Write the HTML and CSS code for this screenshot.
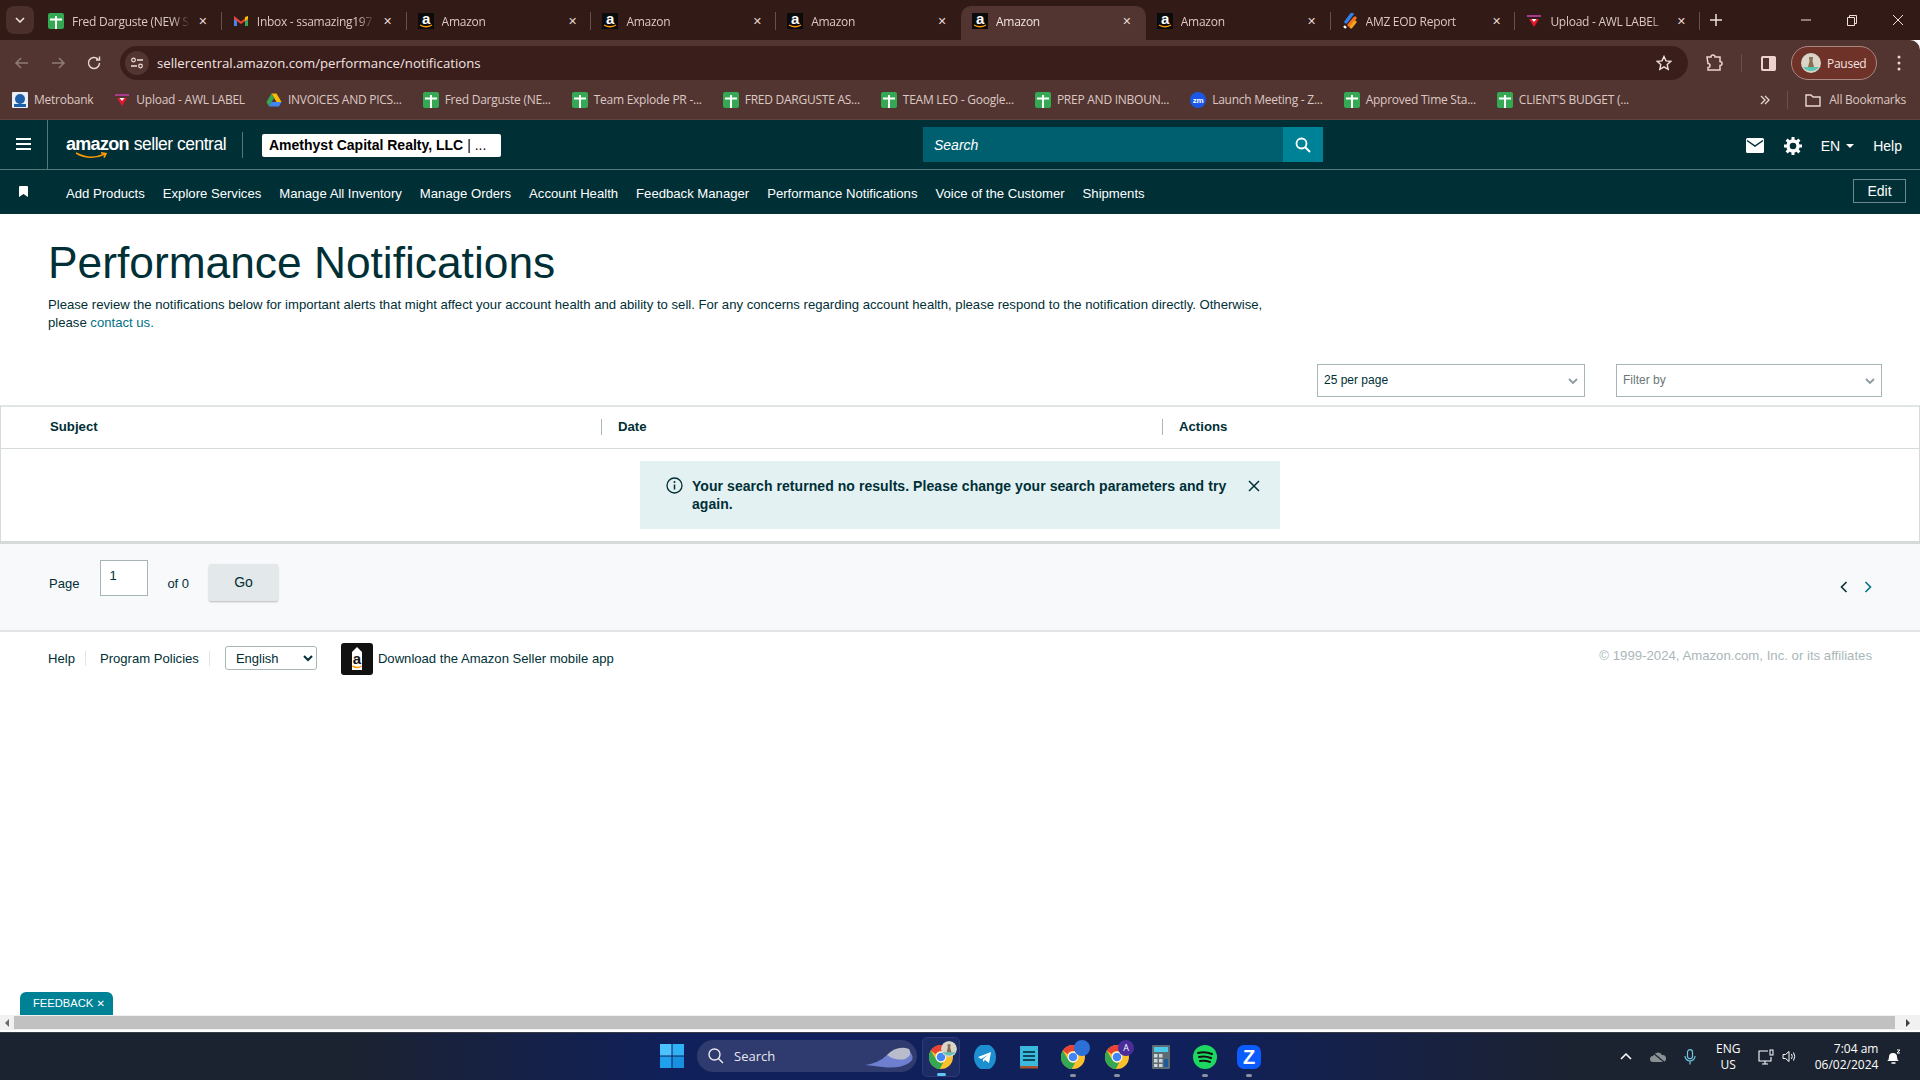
FILE: index.html
```html
<!DOCTYPE html>
<html lang="en">
<head>
    <meta charset="UTF-8">
    <meta name="viewport" content="width=device-width, initial-scale=1.0">
    <title>Performance Notifications</title>
    <link rel="stylesheet" href="styles.css">
</head>
<body>
    <!-- shared favicons -->
    <svg class="defs" width="0" height="0">
        <symbol id="fav-sheet" viewBox="0 0 16 16">
            <rect width="16" height="16" rx="2" fill="#34a853"/>
            <path d="M7 3h2v2.500h5v2H9V16H7V7.500H2v-2h5z" fill="#fff"/>
        </symbol>
        <symbol id="fav-amazon" viewBox="0 0 16 16">
            <rect width="16" height="16" fill="#0b0b0b"/>
            <text x="8" y="10.500" text-anchor="middle" font-family="Liberation Sans" font-weight="700" font-size="15" fill="#fff">a</text>
            <path d="M2 12q6 3.500 12 0" fill="none" stroke="#f90" stroke-width="1.400"/>
        </symbol>
        <symbol id="fav-upload" viewBox="0 0 16 16">
            <path d="M1 2h14v2H1z" fill="#a83a8c"/>
            <path d="M3 6h10l-5 8z" fill="#e0182d"/>
            <path d="M5.500 6h5L8 9z" fill="#fff"/>
        </symbol>
        <symbol id="chrome" viewBox="0 0 24 24">
            <circle cx="12" cy="12" r="12" fill="#fbc02d"/>
            <path d="M12 0a12 12 0 0 1 10.400 6H12a6 6 0 0 0-5.300 3.200L1.800 5.600A12 12 0 0 1 12 0z" fill="#ea4335"/>
            <path d="M1.800 5.600l5 8.400 4 10A12 12 0 0 1 1.800 5.600z" fill="#34a853"/>
            <path d="M6.800 14a6 6 0 0 0 7.400 3.600L10.800 24a12 12 0 0 1-9-6.500z" fill="#34a853"/>
            <circle cx="12" cy="12" r="5.400" fill="#fff"/>
            <circle cx="12" cy="12" r="4.300" fill="#4285f4"/>
        </symbol>
        <symbol id="avatar" viewBox="0 0 20 20">
            <circle cx="10" cy="10" r="10" fill="#d9d5c8"/>
            <path d="M2 14h16a10 10 0 0 1-16 0z" fill="#58c4b4"/>
            <path d="M8 4h4l-.500 4 1.500 6H7l1.500-6z" fill="#8a6d4f"/>
        </symbol>
    </svg>

    <div class="tabstrip">
        <button class="tab-search"><svg width="10" height="6" viewBox="0 0 10 6"><path d="M1 1l4 4 4-4" fill="none" stroke="#f0e0dc" stroke-width="1.600"/></svg></button>
        <div class="tab sep"><svg class="fav"><use href="#fav-sheet"/></svg><span class="tab-title">Fred Darguste (NEW S</span><span class="tab-x">✕</span></div>
        <div class="tab sep">
            <svg class="fav" viewBox="0 0 16 16"><path d="M1 3v10h3V7z" fill="#4285f4"/><path d="M15 3v10h-3V7z" fill="#34a853"/><path d="M1 3l7 5.500L15 3v3L8 11 1 6z" fill="#ea4335"/><path d="M12 4l3-1v3l-3 2z" fill="#fbbc04"/></svg>
            <span class="tab-title">Inbox - ssamazing197</span><span class="tab-x">✕</span>
        </div>
        <div class="tab sep"><svg class="fav"><use href="#fav-amazon"/></svg><span class="tab-title">Amazon</span><span class="tab-x">✕</span></div>
        <div class="tab sep"><svg class="fav"><use href="#fav-amazon"/></svg><span class="tab-title">Amazon</span><span class="tab-x">✕</span></div>
        <div class="tab"><svg class="fav"><use href="#fav-amazon"/></svg><span class="tab-title">Amazon</span><span class="tab-x">✕</span></div>
        <div class="tab active"><svg class="fav"><use href="#fav-amazon"/></svg><span class="tab-title">Amazon</span><span class="tab-x">✕</span></div>
        <div class="tab sep"><svg class="fav"><use href="#fav-amazon"/></svg><span class="tab-title">Amazon</span><span class="tab-x">✕</span></div>
        <div class="tab sep">
            <svg class="fav" viewBox="0 0 16 16"><path d="M4 9l6-8" stroke="#2f80ed" stroke-width="3.400" stroke-linecap="round"/><path d="M7 12l6-7" stroke="#f2711c" stroke-width="3.400" stroke-linecap="round"/><path d="M9 14l4-5" stroke="#f2a51c" stroke-width="3" stroke-linecap="round"/><path d="M2 13l2 2" stroke="#fff" stroke-width="2.400"/></svg>
            <span class="tab-title">AMZ EOD Report</span><span class="tab-x">✕</span>
        </div>
        <div class="tab sep"><svg class="fav"><use href="#fav-upload"/></svg><span class="tab-title">Upload - AWL LABEL</span><span class="tab-x">✕</span></div>
        <svg class="new-tab" width="12" height="12" viewBox="0 0 12 12"><path d="M6 0v12M0 6h12" stroke="#f0e0dc" stroke-width="1.500"/></svg>
        <div class="win-controls">
            <svg width="12" height="12" viewBox="0 0 12 12"><path d="M1 6h10" stroke="#f0e0dc"/></svg>
            <svg width="12" height="12" viewBox="0 0 12 12"><path d="M1.500 3.500h7v8h-7zM3.500 3.500v-2h7v8h-2" fill="none" stroke="#f0e0dc"/></svg>
            <svg width="12" height="12" viewBox="0 0 12 12"><path d="M1 1l10 10M11 1L1 11" stroke="#f0e0dc"/></svg>
        </div>
    </div>

    <div class="toolbar">
        <svg class="nav-arrow" width="16" height="16" viewBox="0 0 16 16"><path d="M14 8H2M7 3L2 8l5 5" fill="none" stroke="#907a76" stroke-width="1.500"/></svg>
        <svg class="nav-arrow" width="16" height="16" viewBox="0 0 16 16"><path d="M2 8h12M9 3l5 5-5 5" fill="none" stroke="#907a76" stroke-width="1.500"/></svg>
        <svg class="nav-arrow" width="16" height="16" viewBox="0 0 16 16"><path d="M13.500 8a5.500 5.500 0 1 1-1.600-3.900M13.500 1.500v3.500H10" fill="none" stroke="#e6d6d2" stroke-width="1.500"/></svg>
        <div class="omnibox">
            <span class="site-info"><svg width="14" height="12" viewBox="0 0 14 12"><circle cx="3.500" cy="3" r="1.800" fill="none" stroke="#f0e0dc" stroke-width="1.200"/><path d="M7 3h6M1 9h6" stroke="#f0e0dc" stroke-width="1.400"/><circle cx="10.500" cy="9" r="1.800" fill="none" stroke="#f0e0dc" stroke-width="1.200"/></svg></span>
            <span class="url">sellercentral.amazon.com/performance/notifications</span>
            <svg class="star" width="16" height="16" viewBox="0 0 16 16"><path d="M8 1.500l2 4.400 4.700.500-3.500 3.200 1 4.700L8 11.900l-4.200 2.400 1-4.700L1.300 6.400 6 5.900z" fill="none" stroke="#f0e0dc" stroke-width="1.400"/></svg>
        </div>
        <svg class="ext" width="18" height="18" viewBox="0 0 18 18"><path d="M2 3h4a2 2 0 0 1 4 0h5v4.500a2 2 0 0 1 0 4V16H3v-2.500a2 2 0 0 0 0-4z" fill="none" stroke="#ecd3ce" stroke-width="1.500"/></svg>
        <span class="tool-sep"></span>
        <svg class="panel" width="15" height="15" viewBox="0 0 15 15"><rect x=".75" y=".75" width="13.500" height="13.500" rx="1" fill="#ecd3ce" stroke="#ecd3ce" stroke-width="1.500"/><rect x="2" y="2" width="6" height="11" fill="#523531"/></svg>
        <div class="paused"><svg class="pic"><use href="#avatar"/></svg>Paused</div>
        <svg class="dots" width="4" height="16" viewBox="0 0 4 16"><circle cx="2" cy="2" r="1.500" fill="#ecd3ce"/><circle cx="2" cy="8" r="1.500" fill="#ecd3ce"/><circle cx="2" cy="14" r="1.500" fill="#ecd3ce"/></svg>
    </div>

    <div class="bookmarks">
        <span class="bm"><svg class="fav" viewBox="0 0 16 16"><rect width="16" height="16" rx="1" fill="#e8eef6"/><circle cx="8" cy="7" r="5" fill="#1d5fa8"/><path d="M2 12h12v3H2z" fill="#1d5fa8"/></svg>Metrobank</span>
        <span class="bm"><svg class="fav"><use href="#fav-upload"/></svg>Upload - AWL LABEL</span>
        <span class="bm"><svg class="fav" viewBox="0 0 16 16"><path d="M5.500 1.500h5l5 8.500h-5z" fill="#fbbc04"/><path d="M5.500 1.500L.500 10 3 14.500 8 6z" fill="#34a853"/><path d="M3 14.500h10l2.500-4.500h-10z" fill="#4285f4"/></svg>INVOICES AND PICS...</span>
        <span class="bm"><svg class="fav"><use href="#fav-sheet"/></svg>Fred Darguste (NE...</span>
        <span class="bm"><svg class="fav"><use href="#fav-sheet"/></svg>Team Explode PR -...</span>
        <span class="bm"><svg class="fav"><use href="#fav-sheet"/></svg>FRED DARGUSTE AS...</span>
        <span class="bm"><svg class="fav"><use href="#fav-sheet"/></svg>TEAM LEO - Google...</span>
        <span class="bm"><svg class="fav"><use href="#fav-sheet"/></svg>PREP AND INBOUN...</span>
        <span class="bm"><svg class="fav" viewBox="0 0 16 16"><circle cx="8" cy="8" r="8" fill="#1a56e8"/><text x="8" y="10.500" text-anchor="middle" font-family="Liberation Sans" font-size="8" font-weight="700" fill="#fff">zm</text></svg>Launch Meeting - Z...</span>
        <span class="bm"><svg class="fav"><use href="#fav-sheet"/></svg>Approved Time Sta...</span>
        <span class="bm"><svg class="fav"><use href="#fav-sheet"/></svg>CLIENT'S BUDGET (...</span>
        <span class="bm-more">
            <svg width="10" height="10" viewBox="0 0 10 10"><path d="M1 1l4 4-4 4M5 1l4 4-4 4" fill="none" stroke="#e6d6d2" stroke-width="1.300"/></svg>
            <span class="tool-sep"></span>
            <span class="bm all-bookmarks"><svg class="fav" viewBox="0 0 16 16"><path d="M1 3h5l2 2h7v9H1z" fill="none" stroke="#e6d6d2" stroke-width="1.400"/></svg>All Bookmarks</span>
        </span>
    </div>

    <header class="sc-header">
        <button class="burger"><svg width="15" height="12" viewBox="0 0 15 12"><path d="M0 1h15M0 6h15M0 11h15" stroke="#fff" stroke-width="1.800"/></svg></button>
        <div class="logo">
            <span class="logo-amazon">amazon</span><span class="logo-rest">seller central</span>
            <svg class="smile" width="33" height="8" viewBox="0 0 33 8"><path d="M1 1q14 8 29 1M26 .8l5 .800-2 4" fill="none" stroke="#f90" stroke-width="1.600"/></svg>
        </div>
        <div class="account">Amethyst Capital Realty, LLC <span class="account-rest">| ...</span></div>
        <div class="search">
            <span class="search-input">Search</span>
            <span class="search-btn"><svg width="16" height="16" viewBox="0 0 16 16"><circle cx="6.500" cy="6.500" r="5" fill="none" stroke="#fff" stroke-width="1.800"/><path d="M10 10l5 5" stroke="#fff" stroke-width="2"/></svg></span>
        </div>
        <div class="head-right">
            <svg width="18" height="15" viewBox="0 0 18 15"><rect width="18" height="15" rx="1.500" fill="#fff"/><path d="M1 2.500l8 5.500 8-5.500" fill="none" stroke="#002f36" stroke-width="1.500"/></svg>
            <svg class="gear" width="18" height="18" viewBox="0 0 18 18"><circle cx="9" cy="9" r="5" fill="none" stroke="#fff" stroke-width="3.400"/><path d="M9 0v4M9 14v4M0 9h4M14 9h4M2.600 2.600l2.800 2.800M12.600 12.600l2.800 2.800M15.400 2.600l-2.800 2.800M5.400 12.600l-2.800 2.800" stroke="#fff" stroke-width="3"/></svg>
            <span class="lang">EN<i class="caret"></i></span>
            <span>Help</span>
        </div>
    </header>

    <nav class="sc-nav">
        <svg class="nav-mark" width="9" height="11" viewBox="0 0 9 11"><path d="M0 1a1 1 0 0 1 1-1h7a1 1 0 0 1 1 1v10L4.500 8 0 11z" fill="#fff"/></svg>
        <a>Add Products</a>
        <a>Explore Services</a>
        <a>Manage All Inventory</a>
        <a>Manage Orders</a>
        <a>Account Health</a>
        <a>Feedback Manager</a>
        <a>Performance Notifications</a>
        <a>Voice of the Customer</a>
        <a>Shipments</a>
        <button class="edit">Edit</button>
    </nav>

    <main class="page">
        <h1>Performance Notifications</h1>
        <p class="intro">Please review the notifications below for important alerts that might affect your account health and ability to sell. For any concerns regarding account health, please respond to the notification directly. Otherwise, please <a href="#">contact us.</a></p>

        <div class="table-controls">
            <div class="fake-select">25 per page<svg width="10" height="7" viewBox="0 0 10 7"><path d="M1 1l4 4 4-4" fill="none" stroke="#8c9c9e" stroke-width="1.800"/></svg></div>
            <div class="fake-select placeholder">Filter by<svg width="10" height="7" viewBox="0 0 10 7"><path d="M1 1l4 4 4-4" fill="none" stroke="#8c9c9e" stroke-width="1.800"/></svg></div>
        </div>

        <div class="results">
            <div class="results-head">
                <span class="th first">Subject</span>
                <span class="th">Date</span>
                <span class="th">Actions</span>
            </div>
            <div class="results-body">
                <div class="notice">
                    <svg class="notice-icon" width="17" height="17" viewBox="0 0 17 17"><circle cx="8.500" cy="8.500" r="7.500" fill="none" stroke="#002f36" stroke-width="1.300"/><path d="M8.500 7.500v5" stroke="#002f36" stroke-width="1.500"/><circle cx="8.500" cy="5" r="1" fill="#002f36"/></svg>
                    <p>Your search returned no results. Please change your search parameters and try again.</p>
                    <svg class="notice-x" width="12" height="12" viewBox="0 0 12 12"><path d="M1 1l10 10M11 1L1 11" stroke="#002f36" stroke-width="1.500"/></svg>
                </div>
            </div>
        </div>

        <div class="pager">
            <span class="pager-text">Page</span>
            <input class="page-input" type="text" value="1">
            <span class="pager-text of">of 0</span>
            <button class="go">Go</button>
            <span class="pager-arrows">
                <svg width="8" height="12" viewBox="0 0 8 12"><path d="M6.500 1L1.500 6l5 5" fill="none" stroke="#002f36" stroke-width="1.600"/></svg>
                <svg width="8" height="12" viewBox="0 0 8 12"><path d="M1.500 1l5 5-5 5" fill="none" stroke="#007185" stroke-width="1.600"/></svg>
            </span>
        </div>

        <footer class="foot">
            <a class="foot-help">Help</a>
            <a class="foot-policies">Program Policies</a>
            <select class="foot-lang"><option>English</option></select>
            <svg class="app-icon" width="32" height="32" viewBox="0 0 32 32"><rect width="32" height="32" rx="3" fill="#111"/><path d="M11 9l5-5 5 5v18H11z" fill="#fff"/><text x="16" y="21" text-anchor="middle" font-family="Liberation Sans" font-weight="700" font-size="15" fill="#111">a</text><path d="M11.500 23q5 3 9 0" fill="none" stroke="#f90" stroke-width="1.500"/></svg>
            <a class="foot-app">Download the Amazon Seller mobile app</a>
            <span class="copyright">© 1999-2024, Amazon.com, Inc. or its affiliates</span>
        </footer>

        <div class="feedback">FEEDBACK <span class="feedback-x">✕</span></div>
    </main>

    <div class="hscroll">
        <i class="arrow-left"></i>
        <span class="thumb"></span>
        <i class="arrow-right"></i>
    </div>

    <div class="taskbar">
        <div class="task-center">
            <svg class="start" width="24" height="24" viewBox="0 0 24 24"><path d="M0 0h11.500v11.500H0z" fill="#4cc2ff"/><path d="M12.500 0H24v11.500H12.500z" fill="#30b0f5"/><path d="M0 12.500h11.500V24H0z" fill="#1f9fec"/><path d="M12.500 12.500H24V24H12.500z" fill="#1790e0"/></svg>
            <div class="task-search">
                <svg width="16" height="16" viewBox="0 0 16 16"><circle cx="6.500" cy="6.500" r="5.500" fill="none" stroke="#e8e8ee" stroke-width="1.400"/><path d="M10.500 10.500l4.500 4.500" stroke="#e8e8ee" stroke-width="1.500"/></svg>
                <span>Search</span>
                <svg class="search-art" width="52" height="26" viewBox="0 0 52 26"><path d="M2 22q14-2 22-10 12-8 24-2 4 6-2 10-10 6-26 4z" fill="#6f7fd0"/><path d="M24 12q10-10 22-6 4 6-4 10-10 2-18-4z" fill="#b9bccb"/></svg>
            </div>
            <div class="task-icons">
                <span class="task-icon current"><svg class="app"><use href="#chrome"/></svg><svg class="badge"><use href="#avatar"/></svg><i class="dot on"></i></span>
                <span class="task-icon"><svg class="app" viewBox="0 0 24 24"><ellipse cx="12" cy="12" rx="11" ry="13" fill="#1b8fd0"/><path d="M5 12l13-5-2 11-4-3-2 2v-3l5-4-7 4z" fill="#fff"/></svg></span>
                <span class="task-icon"><svg class="app" viewBox="0 0 24 24"><path d="M3 1h18v22H3z" fill="#3bb9dc"/><path d="M3 21h18v2.500H3z" fill="#a5562a"/><path d="M6 7h12M6 11h12M6 15h12" stroke="#10465c" stroke-width="1.800"/></svg></span>
                <span class="task-icon"><svg class="app"><use href="#chrome"/></svg><span class="badge badge-blue"></span><i class="dot"></i></span>
                <span class="task-icon"><svg class="app"><use href="#chrome"/></svg><span class="badge badge-purple">A</span><i class="dot"></i></span>
                <span class="task-icon"><svg class="app" viewBox="0 0 24 24"><rect x="3" width="18" height="24" rx="1" fill="#5f6b73"/><rect x="5" y="2" width="14" height="5" fill="#4cc8e8"/><path d="M5 9h3.500v3.500H5zM10 9h3.500v3.500H10zM5 14h3.500v3.500H5zM10 14h3.500v3.500H10zM5 19h3.500v3H5zM10 19h3.500v3H10z" fill="#cfd6da"/><rect x="15" y="14" width="4" height="8" fill="#1c5aa0"/></svg></span>
                <span class="task-icon"><svg class="app" viewBox="0 0 24 24"><circle cx="12" cy="12" r="12" fill="#1ed760"/><path d="M5 8q7-2 14 1M6 12q6-1.500 12 1M7 16q5-1 10 1" fill="none" stroke="#111" stroke-width="2" stroke-linecap="round"/></svg><i class="dot"></i></span>
                <span class="task-icon"><svg class="app" viewBox="0 0 24 24"><rect width="24" height="24" rx="7" fill="#0b5cff"/><text x="12" y="19" text-anchor="middle" font-family="Liberation Sans" font-weight="700" font-size="20" fill="#fff">Z</text></svg><i class="dot"></i></span>
            </div>
        </div>
        <div class="tray">
            <svg class="tray-up" width="12" height="7" viewBox="0 0 12 7"><path d="M1 6l5-5 5 5" fill="none" stroke="#fff" stroke-width="1.500"/></svg>
            <svg class="tray-cloud" width="16" height="12" viewBox="0 0 16 12"><path d="M3 11a3 3 0 0 1 0-6 5 5 0 0 1 9-1 3.500 3.500 0 0 1 1 7z" fill="#8b9095"/><path d="M2 1l12 10" stroke="#1c2330" stroke-width="1.200"/></svg>
            <svg class="tray-mic" width="12" height="16" viewBox="0 0 12 16"><rect x="3.500" y=".700" width="5" height="9" rx="2.500" fill="none" stroke="#6fc6e0" stroke-width="1.200"/><path d="M1 7a5 5 0 0 0 10 0M6 12v3.500" fill="none" stroke="#6fc6e0" stroke-width="1.200"/></svg>
            <div class="tray-lang"><span>ENG</span><span>US</span></div>
            <svg class="tray-net" width="16" height="16" viewBox="0 0 16 16"><path d="M10 2H1v10h12V8M4 15h6M7 12v3" fill="none" stroke="#fff" stroke-width="1.100"/><rect x="12" y="1" width="3" height="5" fill="none" stroke="#fff"/></svg>
            <svg class="tray-vol" width="16" height="13" viewBox="0 0 16 13"><path d="M1 4.500h2.500L7 1.500v10L3.500 8.500H1z" fill="none" stroke="#fff"/><path d="M9.500 4q1.500 2.500 0 5M11.500 2.500q2.500 4 0 8" fill="none" stroke="#fff"/></svg>
            <div class="tray-clock"><span>7:04 am</span><span>06/02/2024</span></div>
            <svg class="tray-bell" width="15" height="16" viewBox="0 0 15 16"><path d="M1 12q2-1 2-4 0-4 4-4t4 4q0 3 2 4z" fill="#fff"/><path d="M5.500 14h4" stroke="#fff" stroke-width="1.500"/><path d="M11 1h3l-3 3h3" fill="none" stroke="#fff"/></svg>
        </div>
    </div>
</body>
</html>
```

FILE: styles.css
```css
* {
    box-sizing: border-box;
}
html, body {
    margin: 0;
    height: 100%;
    overflow: hidden;
}
body {
    display: flex;
    flex-direction: column;
    width: 1920px;
    height: 1080px;
    font-family: "Liberation Sans", Arial, sans-serif;
    color: #002f36;
    background-color: #fff;
}
button {
    font-family: inherit;
}
.defs {
    position: absolute;
}
.fav {
    width: 16px;
    height: 16px;
    flex: none;
}

/* browser chrome */
.tabstrip {
    display: flex;
    align-items: flex-end;
    height: 40px;
    padding-left: 37px;
    background-color: #321a17;
    font-family: "Open Sans", sans-serif;
    font-size: 12px;
    letter-spacing: -.27px;
    color: #dcc8c4;
    position: relative;
}
.tab-search {
    position: absolute;
    left: 6px;
    top: 6px;
    width: 28px;
    height: 28px;
    border: 0;
    border-radius: 8px;
    background-color: #4a2f2b;
    display: flex;
    align-items: center;
    justify-content: center;
}
.tab {
    display: flex;
    align-items: center;
    width: 184.8px;
    height: 34px;
    padding: 0 12px 4px 11px;
    position: relative;
}
.tab.sep::after {
    content: "";
    position: absolute;
    right: 0;
    top: 6px;
    height: 18px;
    width: 1px;
    background-color: #6a514d;
}
.tab.active {
    background-color: #523531;
    border-radius: 10px 10px 0 0;
    color: #f2e4e1;
}
.tab-title {
    flex: 1;
    min-width: 0;
    margin-left: 8px;
    margin-right: 6px;
    white-space: nowrap;
    overflow: hidden;
    -webkit-mask-image: linear-gradient(to right, #000 85%, transparent);
    mask-image: linear-gradient(to right, #000 85%, transparent);
}
.tab-x {
    font-size: 11px;
    width: 14px;
    text-align: center;
    font-family: "DejaVu Sans", sans-serif;
    color: #e6d6d2;
}
.new-tab {
    margin: 0 0 14px 10px;
}
.win-controls {
    display: flex;
    gap: 34px;
    margin-left: 78px;
    margin-bottom: 14px;
}
.toolbar {
    display: flex;
    align-items: flex-end;
    height: 40px;
    background-color: #523531;
    border-radius: 0 10px 0 0;
    padding-left: 14px;
}
.nav-arrow {
    margin: 0 20px 9px 0;
}
.omnibox {
    display: flex;
    align-items: center;
    width: 1568px;
    height: 34px;
    margin-left: -2px;
    background-color: #3a1e1b;
    border-radius: 17px;
    padding: 0 16px 0 5px;
    font-family: "Open Sans", sans-serif;
    font-size: 13.2px;
    color: #f2e4e1;
}
.site-info {
    width: 24px;
    height: 24px;
    border-radius: 50%;
    background-color: #523531;
    display: flex;
    align-items: center;
    justify-content: center;
}
.url {
    margin-left: 8px;
    flex: 1;
}
.ext {
    margin: 0 0 8px 17px;
}
.tool-sep {
    display: inline-block;
    width: 1px;
    height: 18px;
    background-color: #6a514d;
}
.toolbar .tool-sep {
    margin: 0 19px 8px 18px;
}
.panel {
    margin-bottom: 9px;
}
.paused {
    display: flex;
    align-items: center;
    width: 86px;
    height: 34px;
    margin-left: 15px;
    padding-left: 9px;
    border: 1px solid #a98781;
    border-radius: 17px;
    background-color: #6f3228;
    font-family: "Open Sans", sans-serif;
    font-size: 12px;
    letter-spacing: -.27px;
    color: #f2e4e1;
}
.pic {
    width: 20px;
    height: 20px;
    margin-right: 6px;
}
.dots {
    margin: 0 0 9px 20px;
}
.bookmarks {
    display: flex;
    align-items: center;
    gap: 21px;
    height: 40px;
    padding-left: 12px;
    background-color: #523531;
    border-bottom: 1px solid #5f423e;
    font-family: "Open Sans", sans-serif;
    font-size: 12px;
    letter-spacing: -.25px;
    color: #dcc8c4;
}
.bm {
    display: flex;
    align-items: center;
    gap: 6px;
    white-space: nowrap;
}
.bm-more {
    display: flex;
    align-items: center;
    gap: 17px;
    margin-left: auto;
    padding-right: 14px;
}
.all-bookmarks {
    gap: 8px;
}

/* seller central header */
.sc-header {
    display: flex;
    align-items: center;
    height: 50px;
    background-color: #002f36;
    border-bottom: 1px solid #58777b;
    color: #fff;
    position: relative;
}
.burger {
    width: 48px;
    height: 49px;
    padding: 2px 0 0;
    border: 0;
    border-right: 1px solid #58777b;
    background: none;
}
.logo {
    position: relative;
    display: flex;
    align-items: baseline;
    gap: 5px;
    width: 177px;
    height: 26px;
    margin-left: 18px;
    border-right: 1px solid #58777b;
    line-height: 24px;
}
.logo-amazon {
    font-size: 18px;
    font-weight: bold;
    letter-spacing: -.7px;
}
.logo-rest {
    font-size: 17.5px;
    letter-spacing: -.5px;
}
.smile {
    position: absolute;
    left: 9px;
    top: 20px;
}
.account {
    width: 239px;
    height: 23px;
    margin: 2px 0 0 19px;
    padding-left: 7px;
    border-radius: 2px;
    background-color: #fff;
    color: #000;
    font-size: 14px;
    font-weight: bold;
    line-height: 23px;
    white-space: nowrap;
}
.account-rest {
    font-weight: normal;
}
.search {
    display: flex;
    margin: 0 0 0 422px;
    height: 35px;
}
.search-input {
    width: 360px;
    padding-left: 11px;
    background-color: #005f6f;
    font-size: 14px;
    font-style: italic;
    line-height: 36px;
}
.search-btn {
    display: flex;
    align-items: center;
    justify-content: center;
    width: 40px;
    background-color: #008296;
}
.head-right {
    display: flex;
    align-items: center;
    margin-left: auto;
    padding: 2px 18px 0 0;
    font-size: 14px;
}
.gear {
    margin: 0 19px 0 20px;
}
.lang {
    display: flex;
    align-items: center;
    margin-right: 19px;
}
.caret {
    width: 0;
    height: 0;
    margin-left: 6px;
    border: 4px solid transparent;
    border-top: 4px solid #fff;
    border-bottom: 0;
}
.sc-nav {
    display: flex;
    align-items: center;
    gap: 18px;
    height: 44px;
    padding: 2px 14px 0 19px;
    background-color: #002f36;
    color: #fff;
    font-size: 13.13px;
}
.nav-mark {
    margin-right: 20px;
    margin-bottom: 4px;
}
.edit {
    margin-left: auto;
    width: 53px;
    height: 24px;
    margin-bottom: 5px;
    border: 1px solid #6c8a8e;
    background: none;
    color: #fff;
    font-size: 14px;
}

/* page */
.page {
    flex: 1;
    position: relative;
}
h1 {
    margin: 22px 0 0 48px;
    font-size: 44.3px;
    font-weight: normal;
    line-height: 54px;
}
.intro {
    width: 1225px;
    margin: 6px 0 0 48px;
    font-size: 13.13px;
    line-height: 18px;
}
.intro a {
    color: #007185;
    text-decoration: none;
}
.table-controls {
    display: flex;
    justify-content: flex-end;
    gap: 31px;
    margin-top: 32px;
    padding-right: 38px;
}
.fake-select {
    display: flex;
    align-items: center;
    justify-content: space-between;
    width: 268px;
    height: 33px;
    padding: 0 6px 2px 6px;
    border: 1px solid #a6b5b7;
    font-size: 12px;
}
.fake-select svg {
    margin-top: 4px;
}
.fake-select.placeholder {
    width: 266px;
    color: #6c7778;
}
.results {
    margin-top: 8px;
    border: 1px solid #d5dbdb;
    border-top: 2px solid #e1e5e5;
    border-bottom: 3px solid #d5dbdb;
}
.results-head {
    display: grid;
    grid-template-columns: 600px 561px 1fr;
    align-items: center;
    height: 42px;
    padding-bottom: 2px;
    border-bottom: 1px solid #d5dbdb;
}
.th {
    padding-left: 16px;
    border-left: 1px solid #aab7b8;
    font-size: 13.2px;
    font-weight: bold;
    line-height: 16px;
}
.th.first {
    padding-left: 49px;
    border-left: 0;
}
.results-body {
    padding: 12px 0;
}
.notice {
    display: flex;
    width: 640px;
    height: 68px;
    margin: 0 auto;
    padding: 16px 20px 0 26px;
    background-color: #e3f1f3;
}
.notice p {
    flex: 1;
    margin: 0 14px 0 9px;
    font-size: 14px;
    font-weight: bold;
    letter-spacing: .06px;
    line-height: 18px;
}
.notice-x {
    margin-top: 3px;
}
.pager {
    display: flex;
    align-items: center;
    height: 88px;
    padding: 0 48px 0 49px;
    background-color: #f8f9fa;
    border-bottom: 2px solid #e1e5e5;
    font-size: 13px;
}
.pager-text {
    margin-bottom: 8px;
}
.page-input {
    width: 48px;
    height: 36px;
    margin: 0 19px 18px 21px;
    padding: 0 8px 6px;
    border: 1px solid #a6b5b7;
    font-family: inherit;
    font-size: 13px;
    color: #002f36;
}
.go {
    width: 69px;
    height: 37px;
    margin: 0 0 10px 20px;
    border: 0;
    border-radius: 2px;
    background-color: #e3e9ea;
    box-shadow: 0 1px 2px rgba(0,0,0,0.25);
    color: #002f36;
    font-size: 14px;
}
.pager-arrows {
    display: flex;
    gap: 16px;
    margin-left: auto;
}
.foot {
    display: flex;
    align-items: center;
    height: 52px;
    padding: 0 48px;
    font-size: 13.1px;
}
.foot-help {
    padding-right: 10px;
    border-right: 1px solid #e1e5e5;
}
.foot-policies {
    padding: 0 10px 0 14px;
    border-right: 1px solid #e1e5e5;
}
.foot-lang {
    width: 92px;
    height: 24px;
    margin: 0 11px 0 15px;
    padding-left: 6px;
    border: 1px solid #aab7b8;
    border-radius: 3px;
    background-color: #fff;
    font-family: inherit;
    font-size: 13px;
    color: #002f36;
}
.app-icon {
    margin: 2px 5px 0 13px;
}
.copyright {
    margin-left: auto;
    margin-bottom: 6px;
    color: #aab7b8;
    font-size: 13.2px;
}
.feedback {
    position: absolute;
    left: 20px;
    bottom: 0;
    width: 93px;
    height: 23px;
    padding-left: 13px;
    border-radius: 6px 6px 0 0;
    background-color: #008296;
    color: #fff;
    font-size: 11.2px;
    line-height: 23px;
}
.feedback-x {
    font-family: "DejaVu Sans", sans-serif;
    font-size: 10px;
}

/* scrollbar and windows taskbar */
.hscroll {
    display: flex;
    align-items: center;
    height: 17px;
    background-color: #f1f1f1;
    border-bottom: 2px solid #fff;
}
.thumb {
    width: 1881px;
    height: 13px;
    margin: 0 5px;
    background-color: #c1c1c1;
}
.arrow-left, .arrow-right {
    width: 0;
    height: 0;
    margin-left: 5px;
    border: 4px solid transparent;
    border-left: 0;
    border-right: 4px solid #6a6a6a;
}
.arrow-right {
    margin: 0 0 0 6px;
    border-right: 0;
    border-left: 4px solid #404040;
}
.taskbar {
    display: flex;
    align-items: center;
    flex: none;
    height: 48px;
    border-top: 1px solid #3a3f47;
    background: linear-gradient(to right, #1c2330 0, #1c2330 18%, #10205a 35%, #10205a 62%, #1c2330 82%, #1c2330 100%);
    color: #fff;
    font-family: "Open Sans", sans-serif;
    position: relative;
}
.task-center {
    display: flex;
    align-items: center;
    margin: -2px 0 0 660px;
}
.start {
    margin-right: 13px;
}
.task-search {
    display: flex;
    align-items: center;
    gap: 10px;
    width: 220px;
    height: 32px;
    padding-left: 11px;
    border-radius: 16px;
    background-color: #2f3a6e;
    font-size: 13px;
    color: #e8e8ee;
    position: relative;
}
.search-art {
    position: absolute;
    right: 2px;
    top: 3px;
}
.task-icons {
    display: flex;
    margin: 2px 0 0 5px;
    gap: 6px;
}
.task-icon {
    position: relative;
    display: flex;
    align-items: center;
    justify-content: center;
    width: 38px;
    height: 40px;
    border-radius: 5px;
}
.task-icon.current {
    background-color: #1e2c66;
    border: 1px solid #2c3a78;
}
.app {
    width: 24px;
    height: 24px;
}
.badge {
    position: absolute;
    right: 2px;
    top: 3px;
    width: 16px;
    height: 16px;
    border-radius: 50%;
    font-size: 9px;
    line-height: 16px;
    text-align: center;
}
.badge-blue {
    background-color: #2c6fd6;
}
.badge-purple {
    background-color: #4a2c9a;
}
.dot {
    position: absolute;
    left: 16px;
    bottom: 0;
    width: 6px;
    height: 3px;
    border-radius: 2px;
    background-color: #8a90a0;
}
.dot.on {
    left: 14px;
    width: 9px;
    background-color: #5fc6f5;
}
.tray {
    display: flex;
    align-items: center;
    position: absolute;
    left: 1620px;
    top: 0;
    width: 300px;
    height: 47px;
    font-size: 12px;
}
.tray-cloud {
    margin-left: 18px;
}
.tray-mic {
    margin-left: 18px;
}
.tray-lang {
    display: flex;
    flex-direction: column;
    align-items: center;
    margin-left: 20px;
    line-height: 16px;
}
.tray-net {
    margin-left: 18px;
}
.tray-vol {
    margin-left: 8px;
}
.tray-clock {
    display: flex;
    flex-direction: column;
    align-items: flex-end;
    width: 80px;
    line-height: 16px;
}
.tray-bell {
    margin-left: 8px;
}
```
